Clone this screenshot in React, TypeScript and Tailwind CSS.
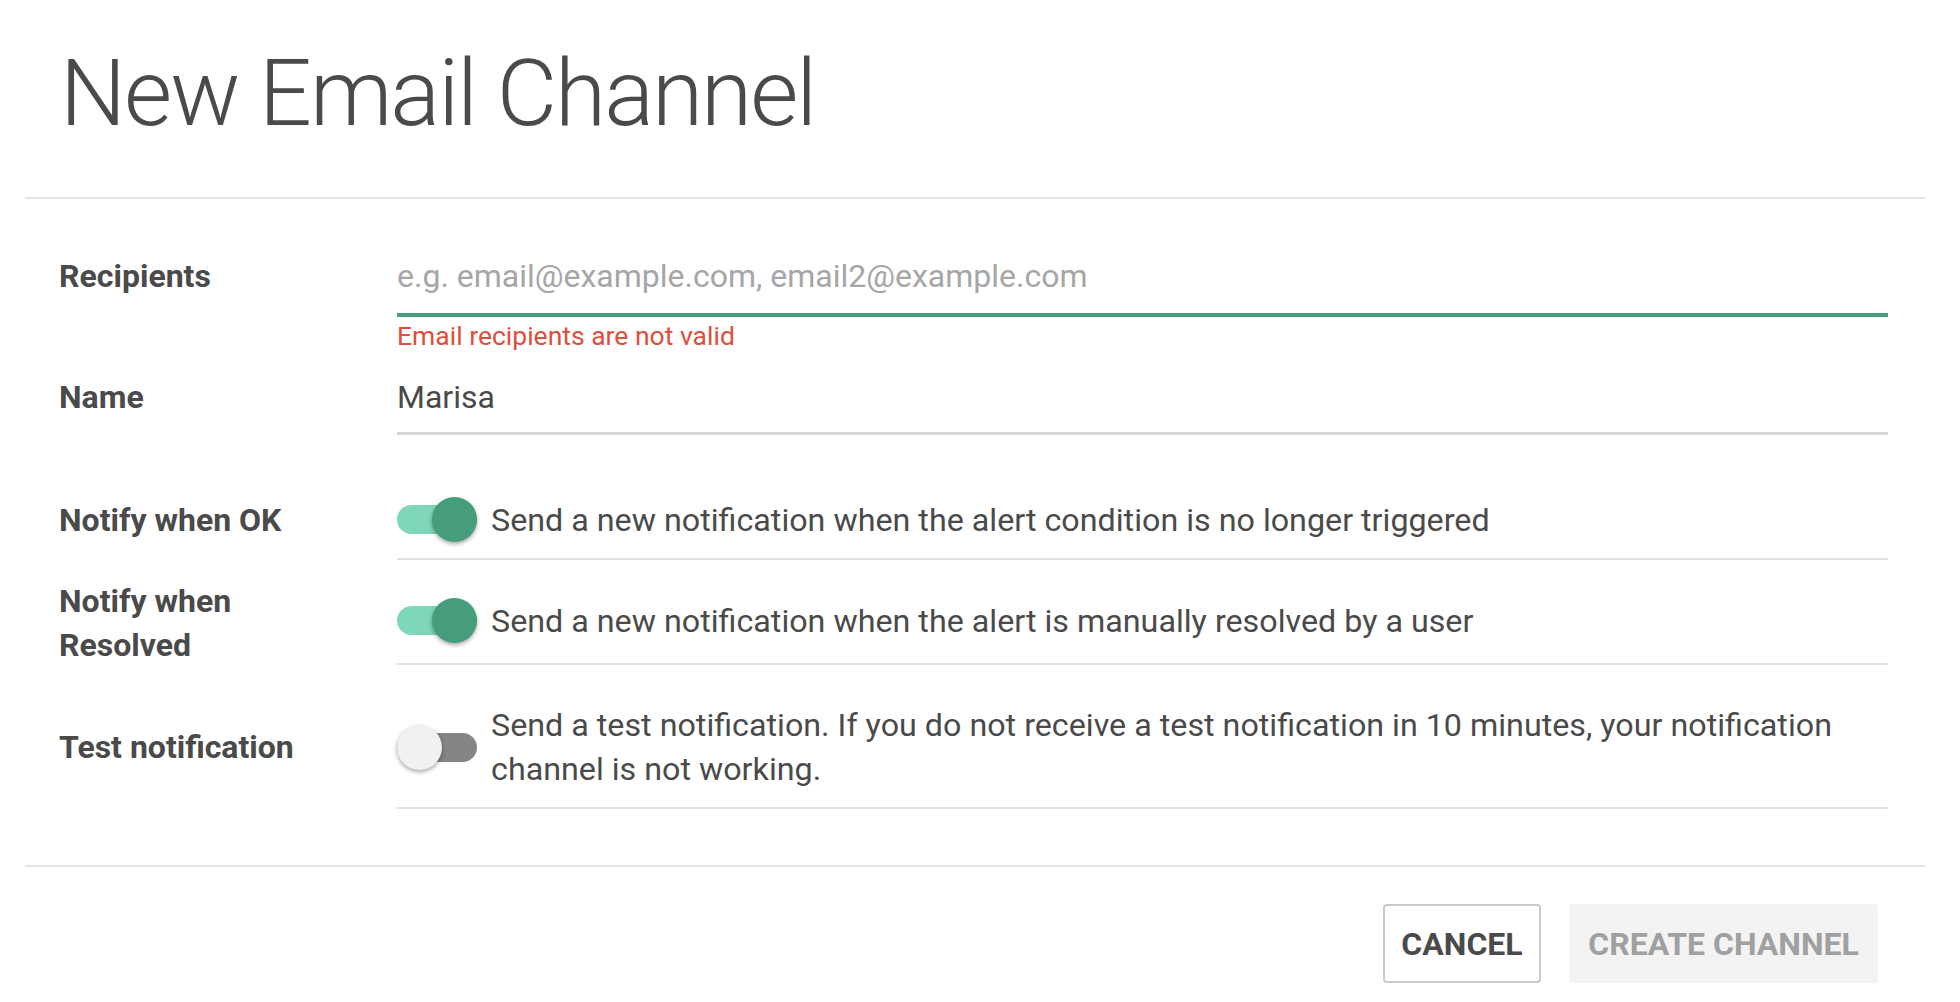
import React from "react";

const font = { fontFamily: "Roboto, 'Noto Sans', Arial, sans-serif" };

function Toggle({ on }: { on: boolean }) {
  return (
    <div className="relative w-[80px] h-[45px] shrink-0 flex items-center">
      <div
        className={
          on
            ? "w-[80px] h-[29px] rounded-full bg-[#7ed6bb]"
            : "w-[80px] h-[29px] rounded-full bg-[#858585]"
        }
      />
      <div
        className={
          on
            ? "absolute right-0 top-0 w-[45px] h-[45px] rounded-full bg-[#459d7c] shadow-[0_2px_4px_rgba(0,0,0,0.35)]"
            : "absolute left-0 top-0 w-[45px] h-[45px] rounded-full bg-[#f1f1f1] shadow-[0_2px_4px_rgba(0,0,0,0.35)]"
        }
      />
    </div>
  );
}

function ToggleRow({
  label,
  text,
  on,
  first,
  tall,
}: {
  label: React.ReactNode;
  text: React.ReactNode;
  on: boolean;
  first?: boolean;
  tall?: boolean;
}) {
  return (
    <div className={first ? "flex mt-[24px]" : "flex"}>
      <div className="w-[338px] shrink-0 self-stretch flex items-center pt-[38px] pb-[18px]">
        <div className="h-0 flex items-center">
          <div className="text-[32px] leading-[44px] font-bold text-[#4a4a4a] whitespace-nowrap">{label}</div>
        </div>
      </div>
      <div
        className={
          tall
            ? "flex-1 flex items-center gap-[14px] pt-[38px] pb-[20px] border-b-2 border-[#e2e2e2]"
            : "flex-1 flex items-center gap-[14px] pt-[38px] pb-[16px] border-b-2 border-[#e2e2e2]"
        }
      >
        <Toggle on={on} />
        <div className="text-[32.25px] leading-[44px] text-[#4a4a4a]">{text}</div>
      </div>
    </div>
  );
}

export default function App() {
  return (
    <div className="w-[1960px] h-[1002px] bg-white overflow-hidden" style={font}>
      <div className="ml-[25px] w-[1900px]">
        <div className="pl-[35px] pt-[47px] pb-[57px]">
          <h1 className="text-[93px] leading-none font-light tracking-[-2px] text-[#4a4a4a]">New Email Channel</h1>
        </div>
        <div className="h-[2px] bg-[#e4e4e4]" />
        <div className="pl-[34px] pr-[37px]">
          <div className="flex mt-[56px]">
            <div className="w-[338px] shrink-0 text-[32px] leading-[42px] font-bold text-[#4a4a4a]">Recipients</div>
            <div className="flex-1">
              <div className="text-[32px] leading-[42px] text-[#a6a6a6] pb-[16px] border-b-4 border-[#479e7f]">
                e.g. email@example.com, email2@example.com
              </div>
              <div className="text-[26.5px] leading-[38px] text-[#dd4f3c]">Email recipients are not valid</div>
            </div>
          </div>
          <div className="flex mt-[21px]">
            <div className="w-[338px] shrink-0 text-[32px] leading-[42px] font-bold text-[#4a4a4a]">Name</div>
            <div className="flex-1 text-[32px] leading-[42px] text-[#4a4a4a] pb-[14px] border-b-[3px] border-[#d6d6d6]">
              Marisa
            </div>
          </div>
          <ToggleRow
            first
            on
            label="Notify when OK"
            text="Send a new notification when the alert condition is no longer triggered"
          />
          <ToggleRow
            on
            tall
            label={
              <>
                Notify when
                <br />
                Resolved
              </>
            }
            text="Send a new notification when the alert is manually resolved by a user"
          />
          <ToggleRow
            on={false}
            label="Test notification"
            text={
              <>
                Send a test notification. If you do not receive a test notification in 10 minutes, your notification
                <br />
                channel is not working.
              </>
            }
          />
        </div>
        <div className="h-[2px] bg-[#e4e4e4] mt-[56px]" />
        <div className="flex justify-end gap-[28px] pr-[47px] mt-[37px]">
          <button className="w-[158px] h-[79px] rounded-[4px] border-2 border-[#cacaca] bg-white text-[32px] font-bold text-[#4a4a4a]">
            CANCEL
          </button>
          <button className="w-[309px] h-[79px] rounded-[4px] bg-[#f3f3f3] text-[32px] font-bold text-[#a0a0a0]">
            CREATE CHANNEL
          </button>
        </div>
      </div>
    </div>
  );
}
